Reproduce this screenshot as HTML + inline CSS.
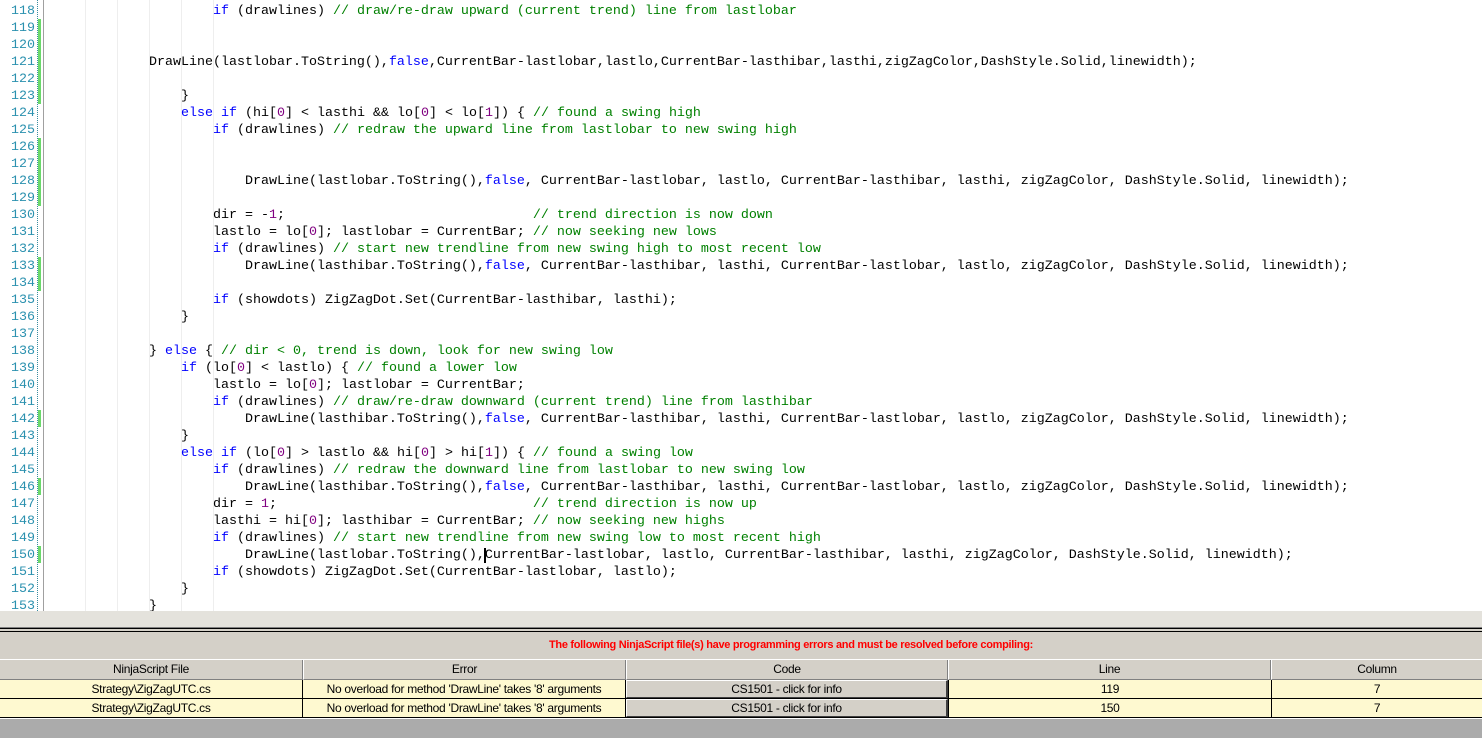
<!DOCTYPE html>
<html><head><meta charset="utf-8"><style>
*{margin:0;padding:0;box-sizing:border-box}
body{width:1482px;height:738px;overflow:hidden;background:#fff;position:relative;font-family:"Liberation Mono",monospace}
.ln{position:absolute;left:0;width:35px;text-align:right;font-size:13.33px;color:#2b91af;line-height:17px;height:17px;margin-top:1px}
.cl{position:absolute;left:53px;font-size:13.33px;line-height:17px;height:17px;white-space:pre;color:#000;margin-top:1px}
.k{color:#0000ff}.c{color:#008000}.n{color:#800080}
.mk{position:absolute;left:38px;width:3px;height:17px;background:#6bd96b}
.g{position:absolute;top:0;height:611px;width:1px;background:#eeeeee}
.ui{font-family:"Liberation Sans",sans-serif}
.cell{position:absolute;text-align:center;font-size:12px;line-height:18px;color:#000;font-family:"Liberation Sans",sans-serif;letter-spacing:-0.3px}
</style></head><body>
<div style="position:absolute;left:37px;top:0;height:611px;border-left:1px dotted #3a8ca0"></div>
<div style="position:absolute;left:43px;top:0;height:611px;width:1px;background:#a0a0a0"></div>
<div class="g" style="left:85px"></div><div class="g" style="left:117px"></div><div class="g" style="left:149px"></div><div class="g" style="left:181px"></div><div class="g" style="left:213px"></div>

<div class="mk" style="top:19px;height:85px"></div>
<div class="mk" style="top:138px;height:68px"></div>
<div class="mk" style="top:257px;height:34px"></div>
<div class="mk" style="top:410px"></div>
<div class="mk" style="top:478px"></div>
<div class="mk" style="top:546px"></div>

<div class="ln" style="top:2px">118</div><div class="cl" style="top:2px">                    <span class="k">if</span> (drawlines) <span class="c">// draw/re-draw upward (current trend) line from lastlobar</span></div>
<div class="ln" style="top:19px">119</div>
<div class="ln" style="top:36px">120</div>
<div class="ln" style="top:53px">121</div><div class="cl" style="top:53px">            DrawLine(lastlobar.ToString(),<span class="k">false</span>,CurrentBar-lastlobar,lastlo,CurrentBar-lasthibar,lasthi,zigZagColor,DashStyle.Solid,linewidth);</div>
<div class="ln" style="top:70px">122</div>
<div class="ln" style="top:87px">123</div><div class="cl" style="top:87px">                }</div>
<div class="ln" style="top:104px">124</div><div class="cl" style="top:104px">                <span class="k">else if</span> (hi[<span class="n">0</span>] &lt; lasthi &amp;&amp; lo[<span class="n">0</span>] &lt; lo[<span class="n">1</span>]) { <span class="c">// found a swing high</span></div>
<div class="ln" style="top:121px">125</div><div class="cl" style="top:121px">                    <span class="k">if</span> (drawlines) <span class="c">// redraw the upward line from lastlobar to new swing high</span></div>
<div class="ln" style="top:138px">126</div>
<div class="ln" style="top:155px">127</div>
<div class="ln" style="top:172px">128</div><div class="cl" style="top:172px">                        DrawLine(lastlobar.ToString(),<span class="k">false</span>, CurrentBar-lastlobar, lastlo, CurrentBar-lasthibar, lasthi, zigZagColor, DashStyle.Solid, linewidth);</div>
<div class="ln" style="top:189px">129</div>
<div class="ln" style="top:206px">130</div><div class="cl" style="top:206px">                    dir = -<span class="n">1</span>;                               <span class="c">// trend direction is now down</span></div>
<div class="ln" style="top:223px">131</div><div class="cl" style="top:223px">                    lastlo = lo[<span class="n">0</span>]; lastlobar = CurrentBar; <span class="c">// now seeking new lows</span></div>
<div class="ln" style="top:240px">132</div><div class="cl" style="top:240px">                    <span class="k">if</span> (drawlines) <span class="c">// start new trendline from new swing high to most recent low</span></div>
<div class="ln" style="top:257px">133</div><div class="cl" style="top:257px">                        DrawLine(lasthibar.ToString(),<span class="k">false</span>, CurrentBar-lasthibar, lasthi, CurrentBar-lastlobar, lastlo, zigZagColor, DashStyle.Solid, linewidth);</div>
<div class="ln" style="top:274px">134</div>
<div class="ln" style="top:291px">135</div><div class="cl" style="top:291px">                    <span class="k">if</span> (showdots) ZigZagDot.Set(CurrentBar-lasthibar, lasthi);</div>
<div class="ln" style="top:308px">136</div><div class="cl" style="top:308px">                }</div>
<div class="ln" style="top:325px">137</div>
<div class="ln" style="top:342px">138</div><div class="cl" style="top:342px">            } <span class="k">else</span> { <span class="c">// dir &lt; 0, trend is down, look for new swing low</span></div>
<div class="ln" style="top:359px">139</div><div class="cl" style="top:359px">                <span class="k">if</span> (lo[<span class="n">0</span>] &lt; lastlo) { <span class="c">// found a lower low</span></div>
<div class="ln" style="top:376px">140</div><div class="cl" style="top:376px">                    lastlo = lo[<span class="n">0</span>]; lastlobar = CurrentBar;</div>
<div class="ln" style="top:393px">141</div><div class="cl" style="top:393px">                    <span class="k">if</span> (drawlines) <span class="c">// draw/re-draw downward (current trend) line from lasthibar</span></div>
<div class="ln" style="top:410px">142</div><div class="cl" style="top:410px">                        DrawLine(lasthibar.ToString(),<span class="k">false</span>, CurrentBar-lasthibar, lasthi, CurrentBar-lastlobar, lastlo, zigZagColor, DashStyle.Solid, linewidth);</div>
<div class="ln" style="top:427px">143</div><div class="cl" style="top:427px">                }</div>
<div class="ln" style="top:444px">144</div><div class="cl" style="top:444px">                <span class="k">else if</span> (lo[<span class="n">0</span>] &gt; lastlo &amp;&amp; hi[<span class="n">0</span>] &gt; hi[<span class="n">1</span>]) { <span class="c">// found a swing low</span></div>
<div class="ln" style="top:461px">145</div><div class="cl" style="top:461px">                    <span class="k">if</span> (drawlines) <span class="c">// redraw the downward line from lastlobar to new swing low</span></div>
<div class="ln" style="top:478px">146</div><div class="cl" style="top:478px">                        DrawLine(lasthibar.ToString(),<span class="k">false</span>, CurrentBar-lasthibar, lasthi, CurrentBar-lastlobar, lastlo, zigZagColor, DashStyle.Solid, linewidth);</div>
<div class="ln" style="top:495px">147</div><div class="cl" style="top:495px">                    dir = <span class="n">1</span>;                                <span class="c">// trend direction is now up</span></div>
<div class="ln" style="top:512px">148</div><div class="cl" style="top:512px">                    lasthi = hi[<span class="n">0</span>]; lasthibar = CurrentBar; <span class="c">// now seeking new highs</span></div>
<div class="ln" style="top:529px">149</div><div class="cl" style="top:529px">                    <span class="k">if</span> (drawlines) <span class="c">// start new trendline from new swing low to most recent high</span></div>
<div class="ln" style="top:546px">150</div><div class="cl" style="top:546px">                        DrawLine(lastlobar.ToString(),CurrentBar-lastlobar, lastlo, CurrentBar-lasthibar, lasthi, zigZagColor, DashStyle.Solid, linewidth);</div>
<div style="position:absolute;left:484px;top:548px;width:2px;height:15px;background:#000"></div>
<div class="ln" style="top:563px">151</div><div class="cl" style="top:563px">                    <span class="k">if</span> (showdots) ZigZagDot.Set(CurrentBar-lastlobar, lastlo);</div>
<div class="ln" style="top:580px">152</div><div class="cl" style="top:580px">                }</div>
<div class="ln" style="top:597px">153</div><div class="cl" style="top:597px">            }</div>

<div style="position:absolute;left:0;top:611px;width:1482px;height:16px;background:#e4e2dc"></div>
<div style="position:absolute;left:0;top:627px;width:1482px;height:1px;background:#808080"></div>
<div style="position:absolute;left:0;top:628px;width:1482px;height:4px;border-top:1px solid #000;border-bottom:1px solid #000;background:#d4d0c8"></div>
<div style="position:absolute;left:0;top:632px;width:1482px;height:86px;background:#d4d0c8"></div>
<div class="ui" style="position:absolute;left:0;top:639px;width:1582px;text-align:center;color:#ff0000;font-weight:bold;font-size:11px;letter-spacing:-0.3px">The following NinjaScript file(s) have programming errors and must be resolved before compiling:</div>
<div style="position:absolute;left:0;top:659px;width:1482px;height:1px;background:#fff"></div>

<div class="cell" style="left:0;top:660px;width:303px;height:20px;border-right:1px solid #808080;border-bottom:1px solid #808080">NinjaScript File</div>
<div class="cell" style="left:303px;top:660px;width:323px;height:20px;border-right:1px solid #808080;border-bottom:1px solid #808080;border-left:1px solid #fff">Error</div>
<div class="cell" style="left:626px;top:660px;width:322px;height:20px;border-right:1px solid #808080;border-bottom:1px solid #808080;border-left:1px solid #fff">Code</div>
<div class="cell" style="left:948px;top:660px;width:323px;height:20px;border-right:1px solid #808080;border-bottom:1px solid #808080;border-left:1px solid #fff">Line</div>
<div class="cell" style="left:1271px;top:660px;width:211px;height:20px;border-bottom:1px solid #808080;border-left:1px solid #fff">Column</div>

<div style="position:absolute;left:0;top:680px;width:1482px;height:38px;background:#fef9d0;border-bottom:1px solid #000"></div>
<div style="position:absolute;left:0;top:698px;width:1482px;height:1px;background:#000"></div>
<div style="position:absolute;left:302px;top:680px;width:1px;height:38px;background:#000"></div>
<div style="position:absolute;left:625px;top:680px;width:1px;height:38px;background:#000"></div>
<div style="position:absolute;left:948px;top:680px;width:1px;height:38px;background:#000"></div>
<div style="position:absolute;left:1271px;top:680px;width:1px;height:38px;background:#000"></div>

<div class="cell" style="left:0;top:680px;width:302px">Strategy\ZigZagUTC.cs</div>
<div class="cell" style="left:303px;top:680px;width:322px">No overload for method 'DrawLine' takes '8' arguments</div>
<div class="cell" style="left:626px;top:680px;width:322px;height:18px;background:#d4d0c8;border-top:1px solid #fff;border-left:1px solid #fff;border-right:2px solid #404040;border-bottom:1px solid #404040;line-height:16px">CS1501 - click for info</div>
<div class="cell" style="left:949px;top:680px;width:322px">119</div>
<div class="cell" style="left:1272px;top:680px;width:210px">7</div>

<div class="cell" style="left:0;top:699px;width:302px">Strategy\ZigZagUTC.cs</div>
<div class="cell" style="left:303px;top:699px;width:322px">No overload for method 'DrawLine' takes '8' arguments</div>
<div class="cell" style="left:626px;top:699px;width:322px;height:18px;background:#d4d0c8;border-top:1px solid #fff;border-left:1px solid #fff;border-right:2px solid #404040;border-bottom:1px solid #404040;line-height:16px">CS1501 - click for info</div>
<div class="cell" style="left:949px;top:699px;width:322px">150</div>
<div class="cell" style="left:1272px;top:699px;width:210px">7</div>

<div style="position:absolute;left:0;top:719px;width:1482px;height:19px;background:#ababab"></div>
</body></html>
